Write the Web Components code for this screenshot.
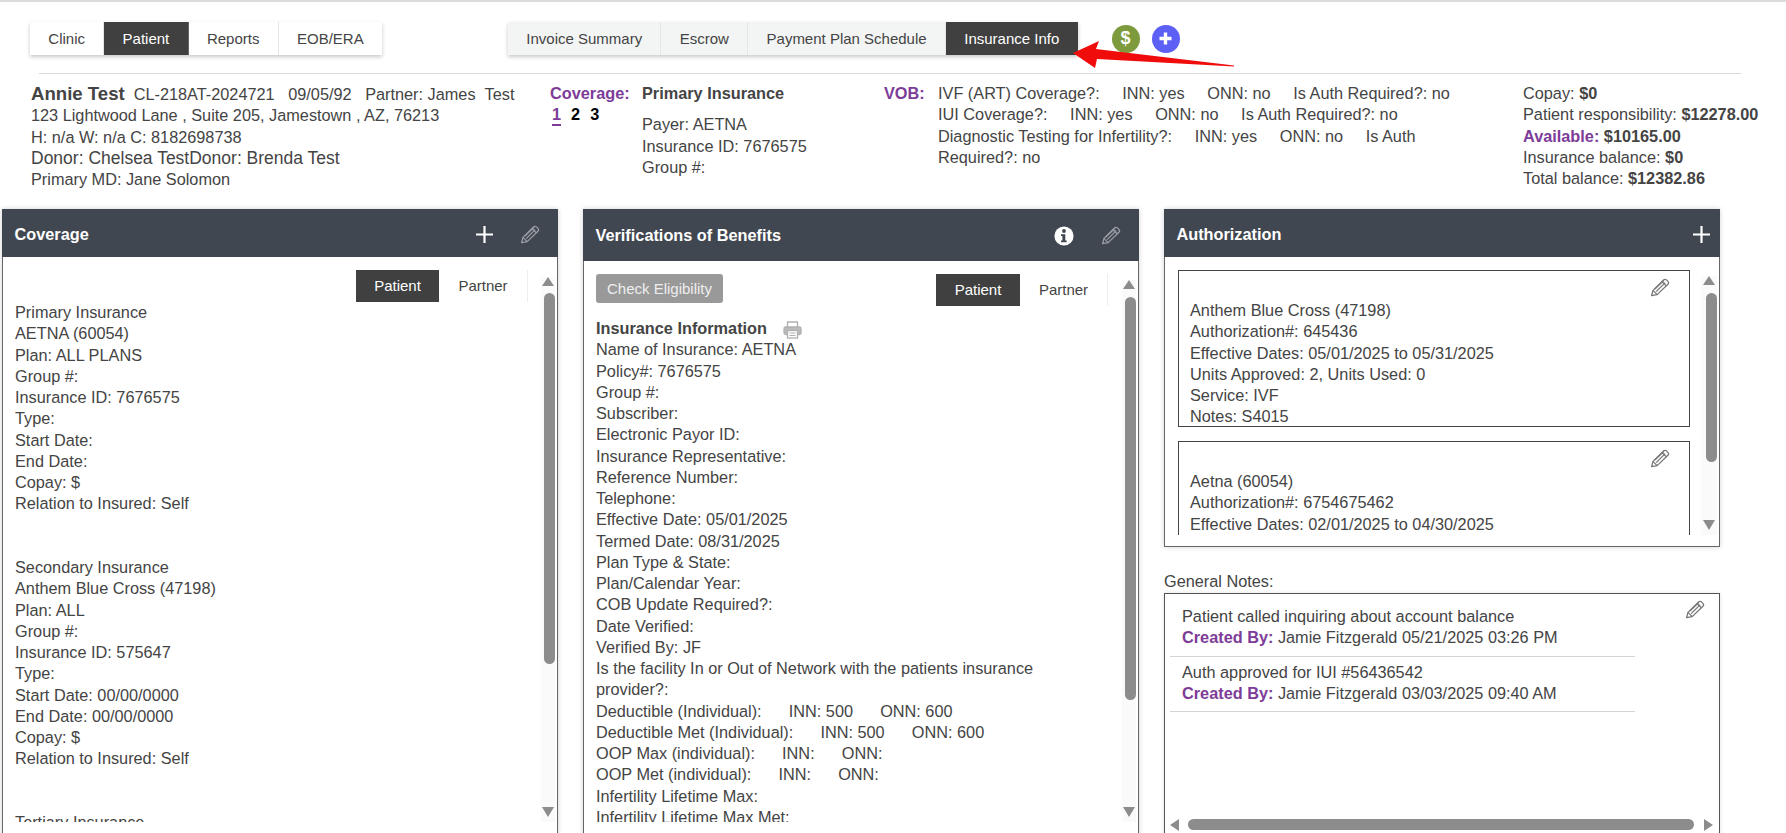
<!DOCTYPE html>
<html lang="en"><head><meta charset="utf-8"><title>Insurance Info</title>
<style>
html,body{margin:0;height:833px;overflow:hidden;background:#fff}
body{font:16.3px/21.25px "Liberation Sans",Arial,sans-serif;color:#444}
</style></head><body>
<app-shell>
  <nav-row>
    <tab-bar style="margin-left:30px"><tab-item>Clinic</tab-item><tab-item active>Patient</tab-item><tab-item>Reports</tab-item><tab-item>EOB/ERA</tab-item></tab-bar>
    <tab-bar tone="grey" style="margin-left:126px"><tab-item>Invoice Summary</tab-item><tab-item>Escrow</tab-item><tab-item>Payment Plan Schedule</tab-item><tab-item active>Insurance Info</tab-item></tab-bar>
    <round-btn color="#7d9a3c" style="margin-left:34px">$</round-btn>
    <round-btn color="#5c60f5" style="margin-left:12px"><svg width="15" height="15" viewBox="0 0 15 15"><path d="M7.5 1.5v12M1.5 7.5h12" stroke="#fff" stroke-width="3.4"/></svg></round-btn>
    <red-arrow></red-arrow>
  </nav-row>
  <patient-summary></patient-summary>
  <panel-grid>
    <info-panel heading="Coverage" head="48" nudge="3">
      <span slot="actions" class="a"><plus-icon style="margin-right:26px"></plus-icon><pencil-icon tone="#9a9ea4"></pencil-icon></span>
      <scroll-pane pad="13px 3px 0 12px" clip="565" top="20" gap="7" thumb="371" gutter="15">
        <toggle-tabs></toggle-tabs>
        <text-lines>Primary Insurance
AETNA (60054)
Plan: ALL PLANS
Group #:
Insurance ID: 7676575
Type:
Start Date:
End Date:
Copay: $
Relation to Insured: Self


Secondary Insurance
Anthem Blue Cross (47198)
Plan: ALL
Group #:
Insurance ID: 575647
Type:
Start Date: 00/00/0000
End Date: 00/00/0000
Copay: $
Relation to Insured: Self


Tertiary Insurance
Plan: ALL</text-lines>
      </scroll-pane>
    </info-panel>
    <info-panel heading="Verifications of Benefits" head="52" nudge="1">
      <span slot="actions" class="a"><info-icon style="margin-right:27px"></info-icon><pencil-icon tone="#9a9ea4"></pencil-icon></span>
      <scroll-pane pad="13px 3px 0 12px" clip="561" top="19" gap="8" thumb="403" gutter="15">
        <vob-top></vob-top>
        <vob-heading></vob-heading>
        <text-lines style="padding-right:30px">Name of Insurance: AETNA
Policy#: 7676575
Group #:
Subscriber:
Electronic Payor ID:
Insurance Representative:
Reference Number:
Telephone:
Effective Date: 05/01/2025
Termed Date: 08/31/2025
Plan Type &amp; State:
Plan/Calendar Year:
COB Update Required?:
Date Verified:
Verified By: JF
Is the facility In or Out of Network with the patients insurance provider?:
Deductible (Individual):      INN: 500      ONN: 600
Deductible Met (Individual):      INN: 500      ONN: 600
OOP Max (individual):      INN:      ONN:
OOP Met (individual):      INN:      ONN:
Infertility Lifetime Max:
Infertility Lifetime Max Met:</text-lines>
      </scroll-pane>
    </info-panel>
    <side-column>
      <info-panel heading="Authorization" head="48" nudge="3" closed>
        <span slot="actions" class="a"><plus-icon style="margin-right:-9px"></plus-icon></span>
        <scroll-pane pad="13px 1px 0 13px" clip="278" top="19" gap="8" thumb="169" gutter="17">
          <auth-card>Anthem Blue Cross (47198)
Authorization#: 645436
Effective Dates: 05/01/2025 to 05/31/2025
Units Approved: 2, Units Used: 0
Service: IVF
Notes: S4015</auth-card>
          <auth-card>Aetna (60054)
Authorization#: 6754675462
Effective Dates: 02/01/2025 to 04/30/2025
Units Approved: 2, Units Used: 0</auth-card>
        </scroll-pane>
      </info-panel>
      <general-notes>
        <note-item text="Patient called inquiring about account balance" by="Jamie Fitzgerald 05/21/2025 03:26 PM"></note-item>
        <note-item text="Auth approved for IUI #56436542" by="Jamie Fitzgerald 03/03/2025 09:40 AM"></note-item>
      </general-notes>
    </side-column>
  </panel-grid>
</app-shell>
<script>
const def=(name,css,html,init)=>customElements.define(name,class extends HTMLElement{
  constructor(){super();this.attachShadow({mode:'open'});}
  connectedCallback(){
    const a=n=>this.getAttribute(n);
    this.shadowRoot.innerHTML=`<style>${typeof css==='function'?css(a):css}</style>${typeof html==='function'?html(a,this):html}`;
    if(init)init(this,a);
  }
});
const pencil=(c)=>`<svg width="20" height="19" viewBox="0 0 20 19" fill="none" stroke="${c}" stroke-width="1.3" stroke-linejoin="round"><path d="M1.6 17.6 3 12.4 13.6 1.9c.8-.8 2-.8 2.8 0l1.5 1.5c.8.8.8 2 0 2.8L7.2 16.6z"/><path d="M3 12.4l4.2 4.2M12 3.5l4.4 4.4M4.9 11 14 2.2M6.2 13.6l9-9"/></svg>`;

def('app-shell',':host{display:block;height:833px;overflow:hidden;border-top:2px solid #dcdcdc;box-sizing:border-box;box-shadow:none}','<slot></slot>');
def('nav-row',':host{display:flex;align-items:center;height:33px;margin-top:20px;position:relative}','<slot></slot>');
def('tab-bar',a=>`:host{display:flex;height:33px;background:${a('tone')?'#f3f4f4':'#fff'};box-shadow:0 2px 4px rgba(0,0,0,.22)}`,'<slot></slot>');
def('tab-item',a=>`:host{display:flex;align-items:center;padding:0 18.3px;font-size:15px;white-space:nowrap;border-right:1px solid #e6e6e6;${a('active')!==null?'background:#404040;color:#fff;border-right-color:#666':'color:#444'}}:host(:last-child){border-right:0}`,'<slot></slot>');
def('round-btn',a=>`:host{display:flex;align-items:center;justify-content:center;width:28px;height:28px;border-radius:50%;background:${a('color')};color:#fff;font:bold 18px "Liberation Sans",sans-serif}`,'<slot></slot>');
def('red-arrow',':host{position:absolute;left:1070px;top:10px;width:166px;height:38px}svg{display:block}','<svg width="166" height="38" viewBox="0 0 166 38"><path d="M3 21 29 9 26 17 164 33.5 164 34.5 27 27 25 36z" fill="#f10c0c"/></svg>');

def('patient-summary',`:host{display:block;margin:18px 45px 0 31px;position:relative}
.rule{height:1px;background:#d9d9d9;margin:0 0 9px 8px;width:1702px}
.cols{display:flex;height:109px}.cols>div{flex:none}
.c1{width:519px;white-space:nowrap}.c2{width:92px}.c3{width:242px}.c4{width:54px;color:#7d3c98;font-weight:bold}.c5{width:540px;margin-right:45px;white-space:pre-wrap}.c6{white-space:nowrap}
b.n{font-size:18.6px;color:#444}.d{font-size:17.5px}.p{color:#7d3c98;font-weight:bold}
.nums{font-weight:bold;color:#000;display:flex;gap:10px;margin-left:2px}.nums span:first-child{color:#7d3c98;border-bottom:2px solid #7d3c98;line-height:20px;height:20px}
.g{height:10px}`,`<div class="rule"></div><div class="cols">
<div class="c1"><b class="n">Annie Test</b>&nbsp; CL-218AT-2024721 &nbsp; 09/05/92 &nbsp; Partner: James &nbsp;Test<br>123 Lightwood Lane , Suite 205, Jamestown , AZ, 76213<br>H: n/a W: n/a C: 8182698738<br><span class="d">Donor: Chelsea TestDonor: Brenda Test</span><br>Primary MD: Jane Solomon</div>
<div class="c2"><span class="p">Coverage:</span><div class="nums"><span>1</span><span>2</span><span>3</span></div></div>
<div class="c3"><b>Primary Insurance</b><div class="g"></div>Payer: AETNA<br>Insurance ID: 7676575<br>Group #:</div>
<div class="c4">VOB:</div>
<div class="c5">IVF (ART) Coverage?:     INN: yes     ONN: no     Is Auth Required?: no
IUI Coverage?:     INN: yes     ONN: no     Is Auth Required?: no
Diagnostic Testing for Infertility?:     INN: yes     ONN: no     Is Auth Required?: no</div>
<div class="c6">Copay: <b>$0</b><br>Patient responsibility: <b>$12278.00</b><br><span class="p">Available:</span> <b>$10165.00</b><br>Insurance balance: <b>$0</b><br>Total balance: <b>$12382.86</b></div>
</div>`);

def('panel-grid',':host{display:grid;grid-template-columns:556px 556px 556px;gap:25px;padding-left:2px;margin-top:17px;align-items:start}','<slot></slot>');
def('side-column',':host{display:block}','<slot></slot>');
def('info-panel',a=>`:host{display:block;box-sizing:border-box;background:#fff;border:1px solid #666;border-top:0;${a('closed')!==null?'height:338px':'height:640px'};box-shadow:0 0 5px rgba(0,0,0,.18)}
header{display:flex;align-items:center;justify-content:space-between;box-sizing:border-box;height:${a('head')}px;margin:0 -1px;background:#414750;color:#fff;padding:${a('nudge')}px 18px 0 12.5px;font-weight:bold;font-size:16.3px}
::slotted(.a){display:flex;align-items:center}`,a=>`<header><span>${a('heading')}</span><slot name="actions"></slot></header><slot></slot>`);
def('scroll-pane',a=>`:host{display:flex;height:${a('clip')}px;overflow:hidden}
.c{flex:1;min-width:0;box-sizing:border-box;padding:${a('pad')};overflow:hidden}
.s{flex:none;width:${a('gutter')}px;background:#fafafa;display:flex;flex-direction:column;align-items:flex-end;box-sizing:border-box;padding:${a('top')}px 1px 0 0;margin-right:1px;background-clip:content-box}
.u,.d{width:0;height:0;border:6px solid transparent;margin-right:-.5px;align-self:center}
.u{border-top:0;border-bottom:9px solid #8c8c8c}.d{border-bottom:0;border-top:10px solid #8c8c8c;margin-bottom:5px}
.t{width:11px;height:${a('thumb')}px;margin-top:${a('gap')}px;background:#8c8c8c;border-radius:6px}.f{flex:1}`,
`<div class="c"><slot></slot></div><div class="s"><div class="u"></div><div class="t"></div><div class="f"></div><div class="d"></div></div>`);
def('toggle-tabs',`:host{display:flex;justify-content:flex-end;padding-right:0;height:32px;margin-right:10px;font-size:15px}
span{display:flex;align-items:center;justify-content:center;box-sizing:border-box}
.a{width:83px;background:#404040;color:#fff}.b{width:89px;border-right:1px solid #eee}`,'<span class="a">Patient</span><span class="b">Partner</span>');
def('text-lines',':host{display:block;white-space:pre-wrap}','<slot></slot>');
def('vob-top',`:host{display:flex;justify-content:space-between;align-items:flex-start;height:44px;margin-right:11px;font-size:15px}
button{all:unset;box-sizing:border-box;width:127px;height:29px;background:#999;color:#eee;border-radius:3px;text-align:center;line-height:27px}
.t{display:flex;height:32px}.t span{display:flex;align-items:center;justify-content:center;box-sizing:border-box}
.a{width:84px;background:#404040;color:#fff}.b{width:88px;border-right:1px solid #eee}`,'<button>Check Eligibility</button><div class="t"><span class="a">Patient</span><span class="b">Partner</span></div>');
def('vob-heading',`:host{display:flex;align-items:center;height:21.25px;gap:16px;font-weight:bold}svg{display:block;margin-top:3px}`,
`<span>Insurance Information</span><svg width="19" height="18" viewBox="0 0 19 18" fill="none" stroke="#b0b0b0" stroke-width="1.3"><path d="M4.5 6V1h10v5"/><rect x="1" y="6" width="17" height="7.5" rx="2" fill="#bbb"/><rect x="4.5" y="9.5" width="10" height="7.5" fill="#fff"/><path d="M6.5 12h6M6.5 14.5h6" stroke-width="1"/></svg>`);
def('auth-card',`:host{display:block;box-sizing:border-box;width:512px;height:157px;border:1px solid #444;margin-bottom:14px;padding:7px 0 0 11px;overflow:hidden}
.p{display:flex;justify-content:flex-end;height:22px;padding-right:19px}.x{white-space:pre-wrap}`,`<div class="p">${pencil('#777')}</div><div class="x"><slot></slot></div>`);
def('plus-icon',':host{display:block;width:19px;height:19px}svg{display:block}','<svg width="19" height="19" viewBox="0 0 19 19"><path d="M9.5 1v17M1 9.5h17" stroke="#fff" stroke-width="2.2"/></svg>');
def('pencil-icon',':host{display:block;width:20px;height:19px}svg{display:block}',a=>pencil(a('tone')));
def('info-icon',':host{display:block;width:20px;height:20px}svg{display:block}','<svg width="20" height="20" viewBox="0 0 20 20"><circle cx="10" cy="10" r="9.6" fill="#fff"/><circle cx="10" cy="5" r="1.9" fill="#414750"/><path d="M7 8.2h4.3v6.2h1.4v1.9H7v-1.9h1.4v-4.3H7z" fill="#414750"/></svg>');
def('general-notes',`:host{display:block;margin-top:24px}
.l{height:22px;line-height:21px}.b{box-sizing:border-box;height:246px;border:1px solid #555;position:relative;display:flex;flex-direction:column;padding:7px 0 0 5px;box-shadow:0 0 4px rgba(0,0,0,.12)}
.pen{position:absolute;right:14px;top:6px}.list{flex:1}
.s{display:flex;align-items:center;height:13px;margin:0 6px 7px 0}
.al,.ar{width:0;height:0;border:6px solid transparent}.al{border-left:0;border-right:9px solid #8c8c8c}.ar{border-right:0;border-left:9px solid #8c8c8c}
.t{flex:1;height:11px;border-radius:6px;background:#8c8c8c;margin:0 10px 0 9px}`,
`<div class="l">General Notes:</div><div class="b"><div class="pen">${pencil('#777')}</div><div class="list"><slot></slot></div><div class="s"><div class="al"></div><div class="t"></div><div class="ar"></div></div></div>`);
def('note-item',`:host{display:block;width:465px;box-sizing:border-box;padding:5px 0 7px 12px;border-bottom:1px solid #d5d5d5}b{color:#7d3c98}`,
a=>`${a('text')}<br><b>Created By:</b> ${a('by')}`);
</script>
</body></html>
